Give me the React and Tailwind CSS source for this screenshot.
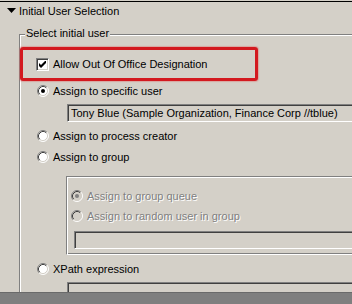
import React from "react";

const Radio = ({ checked = false, disabled = false }) => (
  <svg width="12" height="12" viewBox="0 0 12 12" className="shrink-0">
    <circle cx="6" cy="6" r="5" fill={disabled ? "#d4d0c8" : "#ffffff"} />
    <path d="M9.89 2.11 A5.5 5.5 0 0 0 2.11 9.89" fill="none" stroke="#808080" />
    <path d="M2.11 9.89 A5.5 5.5 0 0 0 9.89 2.11" fill="none" stroke="#ffffff" />
    <path d="M9.18 2.82 A4.5 4.5 0 0 0 2.82 9.18" fill="none" stroke="#404040" />
    <path d="M2.82 9.18 A4.5 4.5 0 0 0 9.18 2.82" fill="none" stroke="#d4d0c8" />
    {checked && <circle cx="6" cy="6" r="2" fill={disabled ? "#808080" : "#000000"} />}
  </svg>
);

const Checkbox = () => (
  <div className="w-[13px] h-[13px] shrink-0 bg-white border border-t-[#808080] border-l-[#808080] border-r-white border-b-white shadow-[inset_1px_1px_0_#404040,inset_-1px_-1px_0_#d4d0c8] flex items-center justify-center">
    <svg width="7" height="7" viewBox="0 0 7 7">
      <polygon points="0,2 2,4 7,-1 7,2 2,7 0,5" fill="#000000" />
    </svg>
  </div>
);

const Field = ({ children, className = "" }) => (
  <div
    className={
      "h-[18px] w-[320px] shrink-0 border border-t-[#808080] border-l-[#808080] border-r-white border-b-white shadow-[inset_1px_1px_0_#404040,inset_-1px_-1px_0_#d4d0c8] flex items-center pl-[3px] whitespace-nowrap " +
      className
    }
  >
    {children}
  </div>
);

const Option = ({ label, checked, disabled, className = "" }) => (
  <div className={"h-[16px] shrink-0 flex items-center gap-[4px] whitespace-nowrap " + className}>
    <Radio checked={checked} disabled={disabled} />
    <span className={disabled ? "text-[#808080] [text-shadow:1px_1px_0_#ffffff]" : ""}>{label}</span>
  </div>
);

export default function App() {
  return (
    <div className="w-[352px] h-[304px] overflow-hidden bg-[#d4d0c8] flex flex-col font-['Liberation_Sans',Arial,sans-serif] text-[11px] leading-[13px] text-black">
      {/* section header */}
      <div className="mt-[1px] h-[26px] shrink-0 border-t border-black flex items-start pl-[7px] pt-[3px] gap-[3px]">
        <svg width="9" height="5" viewBox="0 0 9 5" className="mt-[3px]">
          <polygon points="0,0 9,0 4.5,5" fill="#000000" />
        </svg>
        <span>Initial User Selection</span>
      </div>

      {/* group box */}
      <div className="relative mt-[7px] ml-[19px] flex-1 min-h-0 border-t border-l border-[#808080] shadow-[inset_1px_1px_0_#ffffff] flex flex-col">
        <span className="absolute -top-[8px] left-[5px] px-[1px] bg-[#d4d0c8] whitespace-nowrap">
          Select initial user
        </span>

        <div className="mt-[12px] w-[238px] h-[34px] shrink-0 border-[3px] border-[#d3191f] rounded-[3px] shadow-[0_0_1px_1px_rgba(225,90,90,0.35)] flex items-center pl-[13px] gap-[4px] whitespace-nowrap">
          <Checkbox />
          <span>Allow Out Of Office Designation</span>
        </div>

        <Option className="mt-[2px] pl-[17px]" checked label="Assign to specific user" />
        <Field className="mt-[5px] ml-[47px]">
          Tony Blue (Sample Organization, Finance Corp //tblue)
        </Field>
        <Option className="mt-[6px] pl-[17px]" label="Assign to process creator" />
        <Option className="mt-[5px] pl-[17px]" label="Assign to group" />

        <div className="mt-[11px] ml-[46px] w-[320px] h-[79px] shrink-0 border-t border-l border-b border-t-[#808080] border-l-[#808080] border-b-white shadow-[inset_1px_1px_0_#ffffff,inset_0_-1px_0_#808080] flex flex-col">
          <Option className="mt-[11px] pl-[4px]" checked disabled label="Assign to group queue" />
          <Option className="mt-[4px] pl-[4px]" disabled label="Assign to random user in group" />
          <Field className="mt-[7px] ml-[7px]" />
        </div>

        <Option className="mt-[6px] pl-[17px]" label="XPath expression" />
        <Field className="mt-[5px] ml-[47px]" />
      </div>

      {/* bottom edge */}
      <div className="relative h-[12px] shrink-0 bg-[#7f7f7f] border-t border-[#6a6a6a]" />
    </div>
  );
}
